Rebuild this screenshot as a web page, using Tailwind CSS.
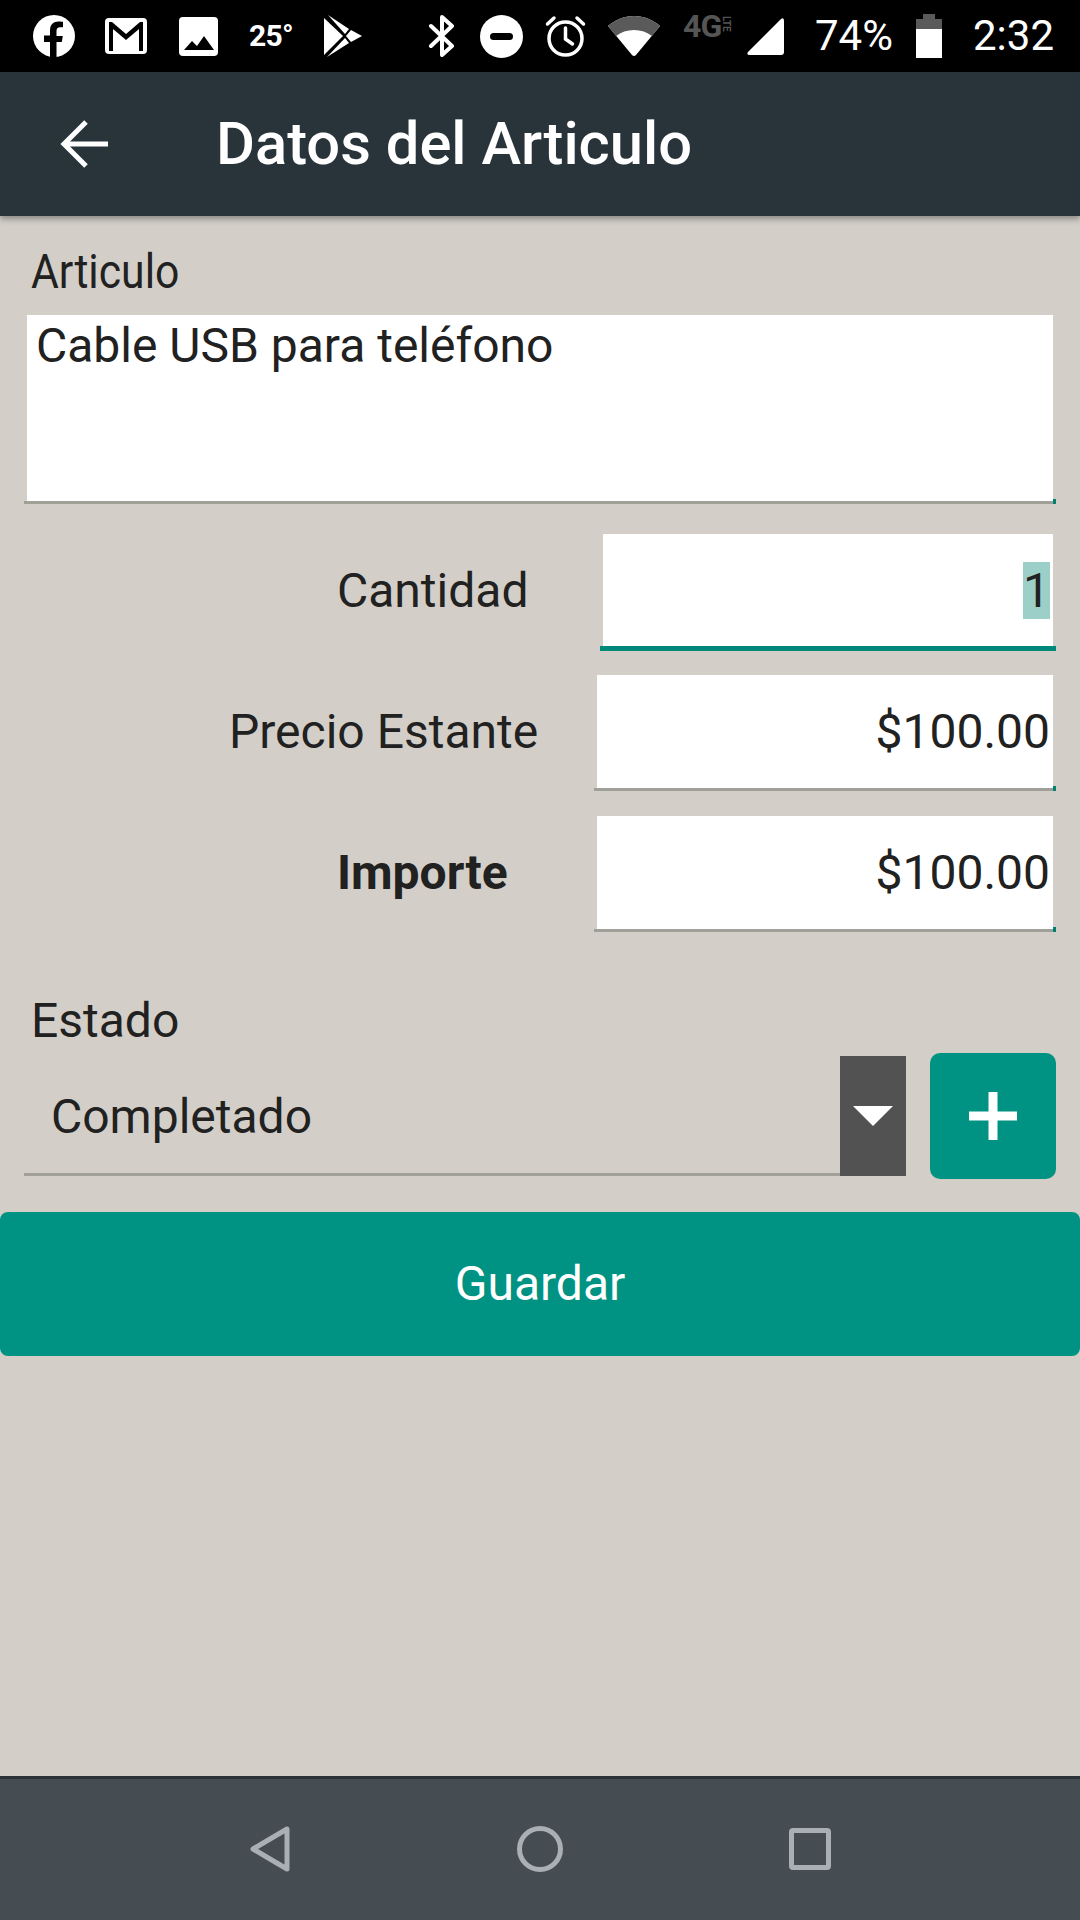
<!DOCTYPE html>
<html lang="en">
<head>
    <meta charset="UTF-8">
    <meta name="viewport" content="width=device-width, initial-scale=1.0">
    <title>Datos del Articulo</title>
    <script src="https://cdn.jsdelivr.net/npm/@tailwindcss/browser@4"></script>
</head>
<body class="bg-[#d3cfc8] font-['Roboto',sans-serif] text-[#212121]">
<div class="w-[1080px] h-[1920px] flex flex-col overflow-hidden">

    <!-- Status bar -->
    <div class="h-[72px] bg-black flex items-center pl-[33px] text-white shrink-0">
        <svg class="w-[42px] h-[42px]" viewBox="0 0 42 42"><circle cx="21" cy="21" r="21" fill="#fff"/><path d="M17 42V27h-6v-6.500h6v-5c0-6 3.500-9 8.500-9 2.500 0 4.500.3 4.500.3v5.500h-2.800c-2.700 0-3.700 1.700-3.700 3.500v5.200h6.300L28.800 27h-5.300v15z" fill="#000"/></svg>
        <svg class="w-[42px] h-[36px] ml-[30px]" viewBox="0 0 42 36"><rect width="42" height="36" rx="4" fill="#fff"/><path d="M4 33V4h3l14 12L35 4h3v29h-4V11L21 22 8 11v22z" fill="#000"/></svg>
        <svg class="w-[39px] h-[39px] ml-[32px]" viewBox="0 0 39 39"><rect width="39" height="39" rx="4" fill="#fff"/><path d="M5 33l8-9 5 5 7-10 10 14z" fill="#000"/></svg>
        <span class="ml-[31px] w-[44px] text-[30px] font-bold leading-none tracking-tight whitespace-nowrap">25°</span>
        <svg class="w-[38px] h-[42px] ml-[31px]" viewBox="0 0 38 42"><path d="M0 3l19 18L0 40z" fill="#fff"/><path d="M4 0l21 14-4 5z" fill="#fff"/><path d="M27 15l11 6-11 6-5-6z" fill="#fff"/><path d="M21 23l4 5-22 14z" fill="#fff"/></svg>
        <svg class="w-[27px] h-[42px] ml-[66px]" viewBox="0 0 27 42" fill="none" stroke="#fff" stroke-width="4" stroke-linejoin="round" stroke-linecap="round"><path d="M3 11l21 20-10 9V2l10 9L3 31"/></svg>
        <svg class="w-[43px] h-[43px] ml-[25px]" viewBox="0 0 43 43"><circle cx="21.500" cy="21.500" r="21.500" fill="#fff"/><rect x="10" y="18" width="23" height="7" rx="3.500" fill="#000"/></svg>
        <svg class="w-[41px] h-[42px] ml-[22px]" viewBox="0 0 41 42" fill="none" stroke="#fff" stroke-width="3.500" stroke-linecap="round"><circle cx="20.500" cy="23.500" r="16.500"/><path d="M20.500 13v11l7 5M2.500 9L9 3M38.500 9L32 3"/></svg>
        <svg class="w-[52px] h-[40px] ml-[22px]" viewBox="0 0 52 40"><path d="M0 10C7 4 16 0 26 0s19 4 26 10L28 39q-2 2-4 0z" fill="#fff"/><path d="M0 10C7 4 16 0 26 0s19 4 26 10l-8 10C39 16 33 14 26 14s-13 2-18 6z" fill="#5a5a5a"/></svg>
        <div class="ml-[23px] w-[50px] h-[40px] flex items-start text-[#555]">
            <span class="text-[32px] font-bold leading-[21px] tracking-tight">4G</span>
            <span class="[writing-mode:vertical-rl] text-[10px] font-bold leading-[9px] tracking-tight">LTE</span>
        </div>
        <svg class="w-[37px] h-[37px] ml-[14px]" viewBox="0 0 37 37"><path d="M34 1q3-2 3 2v31q0 3-3 3H3q-4 0-2-3z" fill="#fff"/></svg>
        <span class="ml-[31px] w-[78px] text-[42px] leading-none whitespace-nowrap">74%</span>
        <svg class="w-[26px] h-[44px] ml-[23px]" viewBox="0 0 26 44"><path d="M7 0h12v5h7v10H0V5h7z" fill="#5a5a5a"/><rect y="15" width="26" height="29" fill="#fff"/></svg>
        <span class="ml-[31px] text-[42px] leading-none">2:32</span>
    </div>

    <!-- App bar -->
    <header class="h-[144px] bg-[#29343a] flex items-center shrink-0 shadow-[0_3px_6px_rgba(0,0,0,0.35)] relative">
        <svg class="w-[50px] h-[48px] ml-[60px]" viewBox="0 0 50 48" fill="none" stroke="#fff" stroke-width="5"><path d="M48 24H4M26 2L4 24l22 22"/></svg>
        <h1 class="ml-[106px] pt-[2px] text-[59.7px] font-medium text-white leading-none whitespace-nowrap">Datos del Articulo</h1>
    </header>

    <!-- Form -->
    <main class="flex-1 flex flex-col">
        <label class="block ml-[31px] mt-[31px] text-[48px] leading-[50px] origin-left scale-x-[0.89]">Articulo</label>

        <div class="relative mx-[24px] mt-[18px] border-b-[3px] border-[#a09f98]">
            <div class="mx-[3px] h-[186px] bg-white px-[9px] pt-[4px] text-[48px] leading-[54px]">Cable USB para teléfono</div>
            <span class="absolute right-0 -bottom-[3px] w-[3px] h-[5px] bg-[#00806f]"></span>
        </div>

        <div class="flex mt-[30px] h-[117px]">
            <span class="w-[337px] shrink-0"></span>
            <span class="w-[263px] text-[48px] leading-[114px]">Cantidad</span>
            <div class="w-[456px] border-b-[5px] border-[#00897b]">
                <div class="mx-[3px] h-[112px] bg-white flex justify-end items-center pr-[3px]">
                    <span class="bg-[#9bcfc8] text-[48px] leading-[57px]">1</span>
                </div>
            </div>
        </div>

        <div class="flex mt-[24px] h-[116px]">
            <span class="w-[229px] shrink-0"></span>
            <span class="w-[365px] text-[48px] leading-[114px]">Precio Estante</span>
            <div class="relative w-[462px] border-b-[3px] border-[#a09f98]">
                <div class="mx-[3px] h-[113px] bg-white flex justify-end items-center pr-[3px] text-[48px]">$100.00</div>
                <span class="absolute right-0 -bottom-[3px] w-[3px] h-[5px] bg-[#00806f]"></span>
            </div>
        </div>

        <div class="flex mt-[25px] h-[116px]">
            <span class="w-[337px] shrink-0"></span>
            <span class="w-[257px] text-[48px] font-bold leading-[114px]">Importe</span>
            <div class="relative w-[462px] border-b-[3px] border-[#a09f98]">
                <div class="mx-[3px] h-[113px] bg-white flex justify-end items-center pr-[3px] text-[48px]">$100.00</div>
                <span class="absolute right-0 -bottom-[3px] w-[3px] h-[5px] bg-[#00806f]"></span>
            </div>
        </div>

        <label class="block ml-[31px] mt-[64px] text-[48px] leading-[50px]">Estado</label>

        <div class="flex items-center mt-[7px] ml-[24px] h-[126px]">
            <div class="w-[816px] h-[120px] border-b-[3px] border-[#a09f98] pl-[27px] text-[48px] leading-[122px]">Completado</div>
            <div class="w-[66px] h-[120px] bg-[#525252] flex items-center justify-center">
                <svg class="w-[40px] h-[20px]" viewBox="0 0 40 20"><path d="M0 0h40L20 20z" fill="#fff"/></svg>
            </div>
            <button class="ml-[24px] w-[126px] h-[126px] bg-[#009383] rounded-[10px] flex items-center justify-center">
                <svg class="w-[48px] h-[48px]" viewBox="0 0 48 48"><path d="M19.500 0h9v19.500h19.500v9H28.500v19.500h-9V28.500H0v-9h19.500z" fill="#fff"/></svg>
            </button>
        </div>

        <button class="mt-[33px] h-[144px] w-full bg-[#009383] rounded-[8px] text-white text-[48px]">Guardar</button>
    </main>

    <!-- Navigation bar -->
    <nav class="h-[144px] bg-[#454c52] border-t-[3px] border-[#2b3338] flex items-center shrink-0 pl-[250px] pb-[2px]">
        <svg class="w-[40px] h-[46px]" viewBox="0 0 40 46" fill="none" stroke="#a9afb2" stroke-width="5" stroke-linejoin="round"><path d="M37 3v40L3 23z"/></svg>
        <svg class="w-[46px] h-[46px] ml-[227px]" viewBox="0 0 46 46" fill="none" stroke="#a9afb2" stroke-width="5"><circle cx="23" cy="23" r="20.500"/></svg>
        <svg class="w-[42px] h-[42px] ml-[226px]" viewBox="0 0 42 42" fill="none" stroke="#a9afb2" stroke-width="5" stroke-linejoin="round"><rect x="2.500" y="2.500" width="37" height="37" rx="1.500"/></svg>
    </nav>
</div>
</body>
</html>
